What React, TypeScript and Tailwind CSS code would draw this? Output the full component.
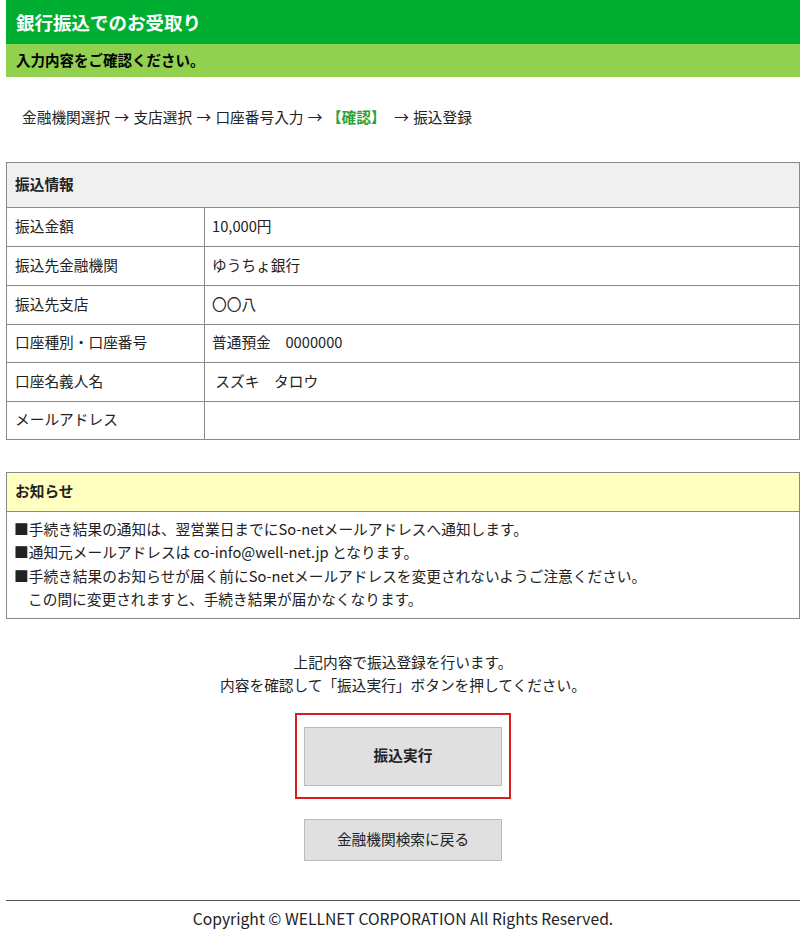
import React from "react";

const font = { fontFamily: '"Noto Sans CJK JP", "Noto Sans", sans-serif' };

const rows: [string, string, string][] = [
  ["振込金額", "10,000円", "h-[39px]"],
  ["振込先金融機関", "ゆうちょ銀行", "h-[39px]"],
  ["振込先支店", "〇〇八", "h-[39px]"],
  ["口座種別・口座番号", "普通預金　0000000", "h-[38px]"],
  ["口座名義人名", " スズキ　タロウ", "h-[39px]"],
  ["メールアドレス", "", "h-[38px]"],
];

export default function App() {
  return (
    <div className="w-[805px] min-h-[944px] bg-white text-[#222] text-[14.7px]" style={font}>
      <div className="mx-[6px] w-[794px]">
        <div className="h-[44px] bg-[#00af32] flex items-center pl-[10px]">
          <h1 className="text-white font-bold text-[18.5px] leading-none">銀行振込でのお受取り</h1>
        </div>
        <div className="h-[33px] bg-[#92d050] flex items-center pl-[10px]">
          <p className="font-bold text-[14.5px] text-black leading-none">入力内容をご確認ください。</p>
        </div>

        <div className="h-[85px] flex items-center pl-[16px] pb-[4px] [word-spacing:1px] whitespace-pre">
          金融機関選択 → 支店選択 → 口座番号入力 → <span className="text-[#2ca039] font-bold">【確認】</span>  → 振込登録
        </div>

        <table className="w-full border-collapse border border-[#888] leading-[20px]">
          <thead>
            <tr>
              <th colSpan={2} className="h-[45px] bg-[#f0f0f0] text-left font-bold px-[8px] pb-[2px] border border-[#888]">振込情報</th>
            </tr>
          </thead>
          <tbody>
            {rows.map(([k, v, h], i) => (
              <tr key={i} className={h}>
                <td className="w-[198px] px-[8px] pb-[3px] border border-[#888]">{k}</td>
                <td className="px-[7px] pb-[3px] border border-[#888] whitespace-pre">{v}</td>
              </tr>
            ))}
          </tbody>
        </table>

        <div className="mt-[32px] border border-[#888]">
          <div className="h-[39px] bg-[#ffffc0] flex items-center px-[8px] pb-[2px] font-bold border-b border-[#888]">お知らせ</div>
          <div className="px-[7px] pt-[5px] pb-[8px] leading-[23.3px]">
            <p>■手続き結果の通知は、翌営業日までにSo-netメールアドレスへ通知します。</p>
            <p>■通知元メールアドレスは co-info@well-net.jp となります。</p>
            <p>■手続き結果のお知らせが届く前にSo-netメールアドレスを変更されないようご注意ください。</p>
            <p className="pl-[14px]">この間に変更されますと、手続き結果が届かなくなります。</p>
          </div>
        </div>

        <div className="mt-[31px] text-center leading-[23px]">
          <p>上記内容で振込登録を行います。</p>
          <p>内容を確認して「振込実行」ボタンを押してください。</p>
        </div>

        <div className="flex flex-col items-center mt-[17px]">
          <div className="w-[216px] h-[86px] border-2 border-[#d81e1e] flex items-center justify-center">
            <button className="w-[198px] h-[59px] bg-[#e0e0e0] border border-[#bbb] font-bold text-[#222] text-[14.7px] pb-[2px]" style={font}>振込実行</button>
          </div>
          <button className="mt-[20px] w-[198px] h-[42px] bg-[#e0e0e0] border border-[#bbb] text-[#222] text-[14.7px] pb-[2px]" style={font}>金融機関検索に戻る</button>
        </div>

        <div className="mt-[39px] border-t border-[#555]" />
        <p className="text-center text-[15.7px] pt-[6px]">Copyright © WELLNET CORPORATION All Rights Reserved.</p>
      </div>
    </div>
  );
}
